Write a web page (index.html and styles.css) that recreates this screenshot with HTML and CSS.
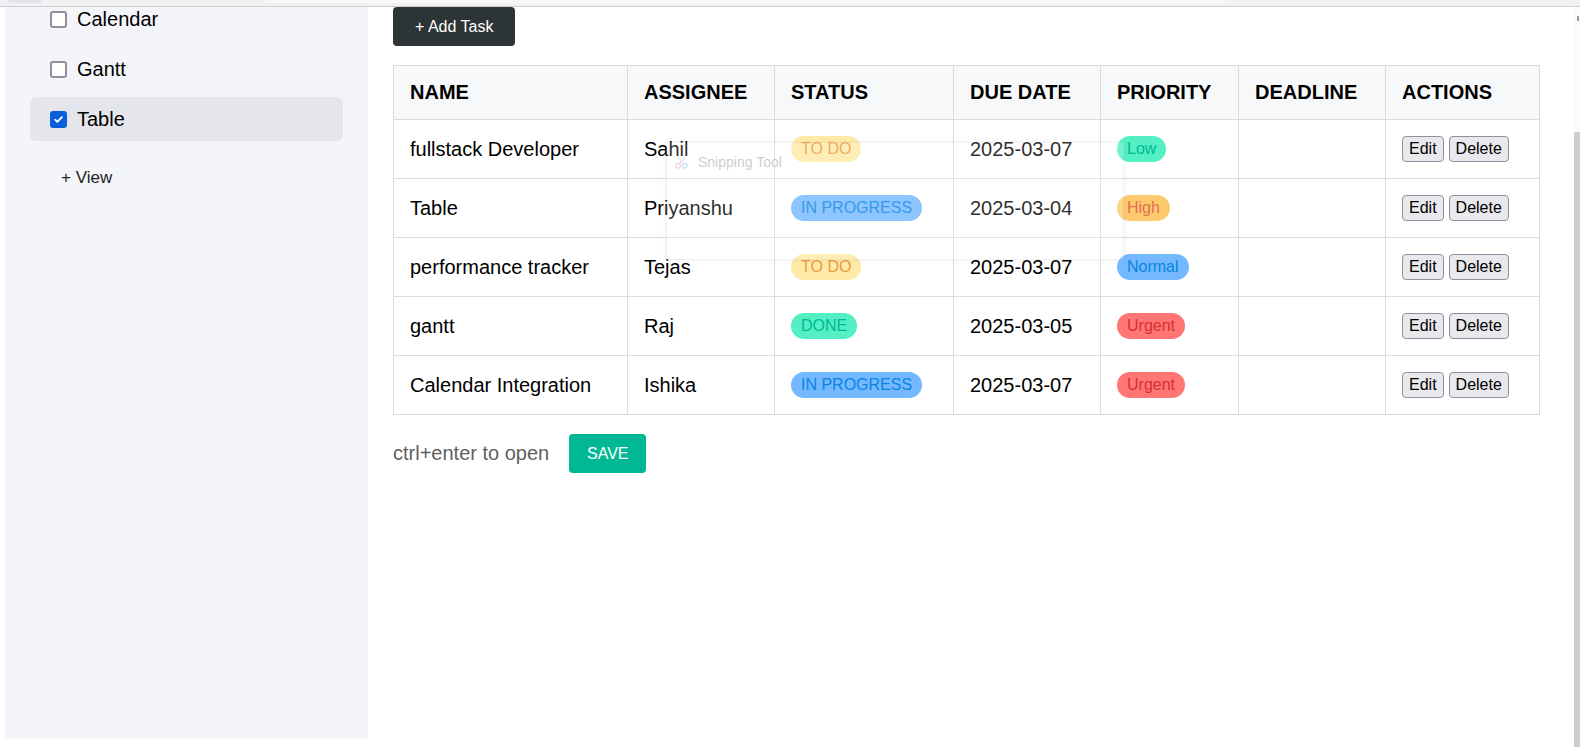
FILE: index.html
```html
<!DOCTYPE html>
<html lang="en">
<head>
<meta charset="utf-8">
<title>Tasks</title>
<link rel="stylesheet" href="styles.css">
</head>
<body>
<div class="topbar"><span class="tab"></span><span class="tab2"></span></div>
<div class="layout">
  <aside class="sidebar">
    <ul class="views">
      <li class="view"><span class="cb"></span>Calendar</li>
      <li class="view"><span class="cb"></span>Gantt</li>
      <li class="view active"><span class="cb checked"><svg viewBox="0 0 16 16" width="16" height="16"><path d="M4 8.3l2.6 2.6L12.2 5.2" fill="none" stroke="#fff" stroke-width="2.2" stroke-linecap="round" stroke-linejoin="round"/></svg></span>Table</li>
    </ul>
    <div class="add-view">+ View</div>
  </aside>
  <main class="main">
    <button class="add-task">+ Add Task</button>
    <table class="tasks">
      <colgroup>
        <col class="c-name"><col class="c-assignee"><col class="c-status"><col class="c-due"><col class="c-priority"><col class="c-deadline"><col class="c-actions">
      </colgroup>
      <thead>
        <tr><th>NAME</th><th>ASSIGNEE</th><th>STATUS</th><th>DUE DATE</th><th>PRIORITY</th><th>DEADLINE</th><th>ACTIONS</th></tr>
      </thead>
      <tbody>
        <tr><td>fullstack Developer</td><td>Sahil</td><td><span class="pill todo">TO DO</span></td><td>2025-03-07</td><td><span class="pill low">Low</span></td><td></td><td><button class="btn">Edit</button><button class="btn">Delete</button></td></tr>
        <tr><td>Table</td><td>Priyanshu</td><td><span class="pill progress">IN PROGRESS</span></td><td>2025-03-04</td><td><span class="pill high">High</span></td><td></td><td><button class="btn">Edit</button><button class="btn">Delete</button></td></tr>
        <tr><td>performance tracker</td><td>Tejas</td><td><span class="pill todo">TO DO</span></td><td>2025-03-07</td><td><span class="pill normal">Normal</span></td><td></td><td><button class="btn">Edit</button><button class="btn">Delete</button></td></tr>
        <tr><td>gantt</td><td>Raj</td><td><span class="pill done">DONE</span></td><td>2025-03-05</td><td><span class="pill urgent">Urgent</span></td><td></td><td><button class="btn">Edit</button><button class="btn">Delete</button></td></tr>
        <tr><td>Calendar Integration</td><td>Ishika</td><td><span class="pill progress">IN PROGRESS</span></td><td>2025-03-07</td><td><span class="pill urgent">Urgent</span></td><td></td><td><button class="btn">Edit</button><button class="btn">Delete</button></td></tr>
      </tbody>
    </table>
    <div class="footer">
      <span class="hint">ctrl+enter to open</span>
      <button class="save">SAVE</button>
    </div>
  </main>
</div>
<div class="snip">
  <div class="snip-title">
    <svg viewBox="0 0 16 16" width="15" height="15"><circle cx="4.5" cy="11.5" r="2.5" fill="none" stroke="#f2b3b3" stroke-width="1.3"/><circle cx="11.5" cy="11.5" r="2.5" fill="none" stroke="#a9cdf2" stroke-width="1.3"/><path d="M6 10L12 2M10 10L4 2" stroke="#c9d8ea" stroke-width="1.3" fill="none"/></svg>
    <span>Snipping Tool</span>
  </div>
</div>
<div class="scrollbar"><span class="arrow"></span><div class="thumb"></div></div>
</body>
</html>
```
FILE: styles.css
```css
* { box-sizing: border-box; }
html, body { margin: 0; padding: 0; }
body {
  width: 1580px;
  height: 747px;
  overflow: hidden;
  background: #fff;
  font-family: "Liberation Sans", Arial, sans-serif;
  color: #000;
  position: relative;
}
.topbar {
  height: 7px;
  background: #f1f1f4;
  border-bottom: 1px solid #cfcfd3;
  position: relative;
}
.topbar .tab {
  position: absolute;
  left: 8px; top: 0;
  width: 34px; height: 3px;
  background: #e4e4e8;
  border-radius: 0 0 3px 3px;
}
.topbar .tab2 {
  position: absolute;
  left: 265px; top: 0;
  width: 960px; height: 3px;
  background: #f7f7f9;
}
.layout {
  display: flex;
  align-items: flex-start;
  padding-left: 5px;
}
.sidebar {
  width: 363px;
  height: 732px;
  background: #f4f5f9;
  padding: 0 25px;
  overflow: hidden;
}
.views {
  list-style: none;
  margin: -10px 0 0;
  padding: 0;
  display: flex;
  flex-direction: column;
  gap: 6px;
}
.view {
  height: 44px;
  display: flex;
  align-items: center;
  gap: 10px;
  padding-left: 20px;
  font-size: 20px;
  color: #000;
  border-radius: 6px;
}
.view.active { background: #e5e6eb; }
.cb {
  width: 17px;
  height: 17px;
  border: 2px solid #8f8f9d;
  border-radius: 3px;
  background: #fff;
  display: inline-flex;
  align-items: center;
  justify-content: center;
  flex: none;
}
.cb.checked {
  background: #0b5fdc;
  border-color: #0b5fdc;
}
.cb.checked svg { width: 15px; height: 15px; }
.add-view {
  margin: 27px 0 0 31px;
  font-size: 17px;
  line-height: 20px;
  color: #222;
}
.main {
  flex: 1;
  padding-left: 25px;
}
.add-task {
  display: block;
  height: 39px;
  padding: 0 22px;
  background: #2d3436;
  color: #fff;
  border: none;
  border-radius: 4px;
  font-family: inherit;
  font-size: 16px;
}
.tasks {
  margin-top: 19px;
  width: 1146px;
  table-layout: fixed;
  border-collapse: collapse;
  font-size: 20px;
}
.c-name { width: 234px; }
.c-assignee { width: 147px; }
.c-status { width: 179px; }
.c-due { width: 147px; }
.c-priority { width: 138px; }
.c-deadline { width: 147px; }
.c-actions { width: 154px; }
.tasks th, .tasks td {
  border: 1px solid #dcdcdf;
  text-align: left;
  padding: 16px;
  white-space: nowrap;
}
.tasks th {
  background: #f7f8fa;
  font-weight: bold;
  line-height: 22px;
  padding: 15px 16px 16px;
}
.tasks td {
  line-height: 26px;
  height: 58px;
}
.pill {
  display: inline-block;
  vertical-align: top;
  height: 26px;
  line-height: 18px;
  padding: 4px 10px;
  border-radius: 13px;
  font-size: 16px;
}
.todo { background: #ffeaa7; color: #ec9a3f; }
.progress { background: #74b9ff; color: #0984e3; }
.done { background: #55efc4; color: #00b894; }
.low { background: #55efc4; color: #00b894; }
.high { background: #fdcb6e; color: #e17055; }
.normal { background: #74b9ff; color: #0984e3; }
.urgent { background: #ff7675; color: #d63031; }
.btn {
  display: inline-block;
  vertical-align: top;
  height: 26px;
  padding: 0 6px;
  margin: 0 5px 0 0;
  background: #e9e9ed;
  border: 1px solid #8f8f9d;
  border-radius: 4px;
  font-family: inherit;
  font-size: 16px;
  line-height: 24px;
  color: #000;
}
.footer {
  margin-top: 19px;
  display: flex;
  align-items: center;
  gap: 20px;
}
.hint {
  font-size: 20px;
  color: #5f5f5f;
}
.save {
  height: 39px;
  width: 77px;
  background: #00b894;
  color: #fff;
  border: none;
  border-radius: 4px;
  font-family: inherit;
  font-size: 16px;
}
.snip {
  position: absolute;
  left: 666px;
  top: 142px;
  width: 458px;
  height: 118px;
  background: rgba(255, 255, 255, 0.18);
  border: 1px solid rgba(0, 0, 0, 0.05);
  box-shadow: 0 0 6px rgba(0, 0, 0, 0.06);
}
.snip-title {
  display: flex;
  align-items: center;
  gap: 9px;
  margin: 11px 0 0 7px;
  font-size: 14px;
  color: rgba(160, 160, 160, 0.55);
}
.snip-title svg { opacity: 0.6; }
.scrollbar {
  position: absolute;
  right: 0;
  top: 7px;
  width: 6px;
  bottom: 0;
  background: #fafafa;
}
.scrollbar .arrow {
  position: absolute;
  left: 3px;
  top: 9px;
  width: 2px;
  height: 5px;
  background: #9a9a9a;
}
.scrollbar .thumb {
  position: absolute;
  left: 0;
  right: 0;
  top: 125px;
  bottom: 0;
  background: #cdcdcd;
}
```
